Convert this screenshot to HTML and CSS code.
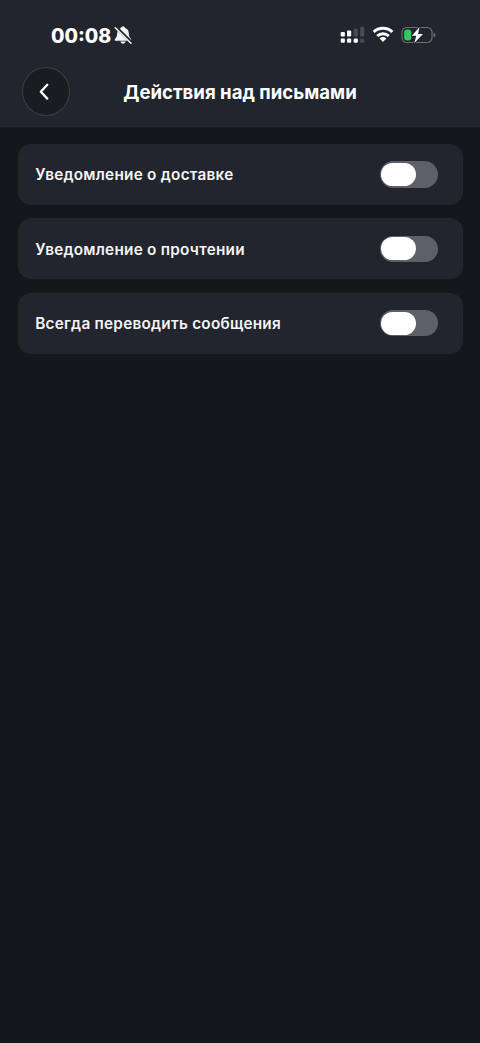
FILE: index.html
```html
<!DOCTYPE html>
<html lang="ru">
<head>
<meta charset="utf-8">
<title>Действия над письмами</title>
<link rel="stylesheet" href="styles.css">
</head>
<body>
<header class="header">
  <div class="status">
    <div class="status-left">
      <span class="clock">00:08</span>
      <svg class="bell" width="20" height="20" viewBox="0 0 20 20">
        <path d="M10 1.400c-1.200 0-2 .7-2.200 1.600C5.200 3.900 4.200 6 4.200 8.300c0 3-.9 4.300-2.200 5.600-.7.800-.2 1.900.8 1.900h14.400c1 0 1.500-1.100.8-1.900-1.300-1.300-2.200-2.600-2.200-5.600 0-2.300-1-4.400-3.600-5.300C12 2.100 11.200 1.400 10 1.400zM7.400 16.600h5.200c-.3 1.300-1.300 2.100-2.600 2.100s-2.300-.8-2.600-2.100z" fill="#f4f5f6"/>
        <path d="M3.100 2.400l15.800 15.500" stroke="#22252d" stroke-width="3.300"/>
        <path d="M2.300 2.700l15.700 15.500" stroke="#f4f5f6" stroke-width="1.500" stroke-linecap="round"/>
      </svg>
    </div>
    <div class="status-right">
      <svg width="25" height="20" viewBox="0 0 25 20">
        <g fill="#fff">
          <rect x=".7" y="7" width="4.200" height="4.500" rx="1"/>
          <rect x="7" y="5.600" width="4.200" height="5.900" rx="1"/>
          <rect x=".7" y="13.500" width="4.200" height="4.200" rx="1.200"/>
          <rect x="7" y="13.500" width="4.200" height="4.200" rx="1.200"/>
          <rect x="13.700" y="13.500" width="4.200" height="4.200" rx="1.200"/>
        </g>
        <g fill="#484b53">
          <rect x="13.700" y="3.700" width="4.200" height="7.800" rx="1"/>
          <rect x="20.100" y="1.700" width="4.200" height="9.800" rx="1"/>
          <rect x="20.100" y="13.500" width="4.200" height="4.200" rx="1.200"/>
        </g>
      </svg>
      <svg class="wifi" width="22" height="20" viewBox="0 0 22 20">
        <g fill="none" stroke="#fff" stroke-width="3">
          <path d="M1.700 7a13.500 13.500 0 0 1 18.600 0"/>
          <path d="M5.200 11a8.700 8.700 0 0 1 11.600 0"/>
        </g>
        <path d="M7.600 13.500a5.300 5.300 0 0 1 6.800 0L11 17z" fill="#fff"/>
      </svg>
      <svg class="battery" width="36" height="20" viewBox="0 0 36 20">
        <rect x="1" y="2.500" width="30" height="15" rx="4.800" fill="none" stroke="#6c6f76" stroke-width="1.200"/>
        <path d="M32.600 7.800c1.500.4 1.800 1.200 1.800 2.300s-.3 1.900-1.800 2.300z" fill="#6c6f76"/>
        <rect x="3.100" y="4.600" width="7.300" height="11" rx="3" fill="#34c759"/>
        <path d="M18.500 1.900L10.800 10.800h4.500l-2.100 7.500 8.700-9.400h-4.800z" fill="#fff" stroke="#22252d" stroke-width="2" paint-order="stroke" stroke-linejoin="round"/>
      </svg>
    </div>
  </div>
  <div class="nav">
    <button class="back" aria-label="Назад">
      <svg width="20" height="20" viewBox="0 0 20 20"><path d="M11.300 2.800L4.800 9.700l6.500 6.900" fill="none" stroke="#fff" stroke-width="2.300" stroke-linecap="round" stroke-linejoin="round"/></svg>
    </button>
    <h1 class="title">Действия над письмами</h1>
  </div>
</header>
<main class="list">
  <label class="card"><span class="label">Уведомление о доставке</span><span class="switch"><span class="knob"></span></span></label>
  <label class="card"><span class="label">Уведомление о прочтении</span><span class="switch"><span class="knob"></span></span></label>
  <label class="card"><span class="label">Всегда переводить сообщения</span><span class="switch"><span class="knob"></span></span></label>
</main>
</body>
</html>
```
FILE: styles.css
```css
* { box-sizing: border-box; }
body {
  margin: 0;
  min-height: 1043px;
  background: #15171a;
  color: #f4f5f6;
  font-family: Inter, "Noto Sans", sans-serif;
}
.header {
  height: 127px;
  padding-top: 25px;
  background: #22252d;
  border-bottom: 1px solid #242930;
}
.status {
  display: flex;
  justify-content: space-between;
  height: 20px;
  padding: 0 43px 0 51px;
}
.status-left, .status-right { display: flex; align-items: center; }
.clock {
  width: 60px;
  padding-top: 2px;
  color: #fff;
  font-size: 19.500px;
  font-weight: 770;
  line-height: 20px;
  white-space: nowrap;
}
.bell { margin-left: 2px; }
.wifi { margin-left: 7px; }
.battery { margin-left: 7px; }
.nav {
  display: grid;
  grid-template-columns: 48px 1fr 48px;
  align-items: center;
  padding: 22px 22px 0;
}
.back {
  display: flex;
  align-items: center;
  justify-content: center;
  width: 48px;
  height: 49px;
  padding: 0;
  border: 1px solid #3a3e46;
  border-radius: 50%;
  background: #191c21;
}
.title {
  margin: 0;
  color: #fff;
  font-size: 18.600px;
  font-weight: 750;
  line-height: 24px;
  text-align: center;
  white-space: nowrap;
}
.list {
  display: flex;
  flex-direction: column;
  gap: 13.200px;
  padding: 17.200px 17.500px;
}
.card {
  display: flex;
  align-items: center;
  justify-content: space-between;
  height: 61px;
  padding: 0 24.500px 0 17.700px;
  border-radius: 13px;
  background: #22252d;
}
.label {
  padding-top: 1.600px;
  font-size: 15.300px;
  font-weight: 600;
  line-height: 20px;
  letter-spacing: .26px;
  white-space: nowrap;
}
.switch {
  display: flex;
  width: 58.500px;
  height: 26.500px;
  padding: 1.700px;
  border-radius: 14px;
  background: #5d6068;
}
.knob {
  width: 34.500px;
  border-radius: 12px;
  background: #fff;
}
```
